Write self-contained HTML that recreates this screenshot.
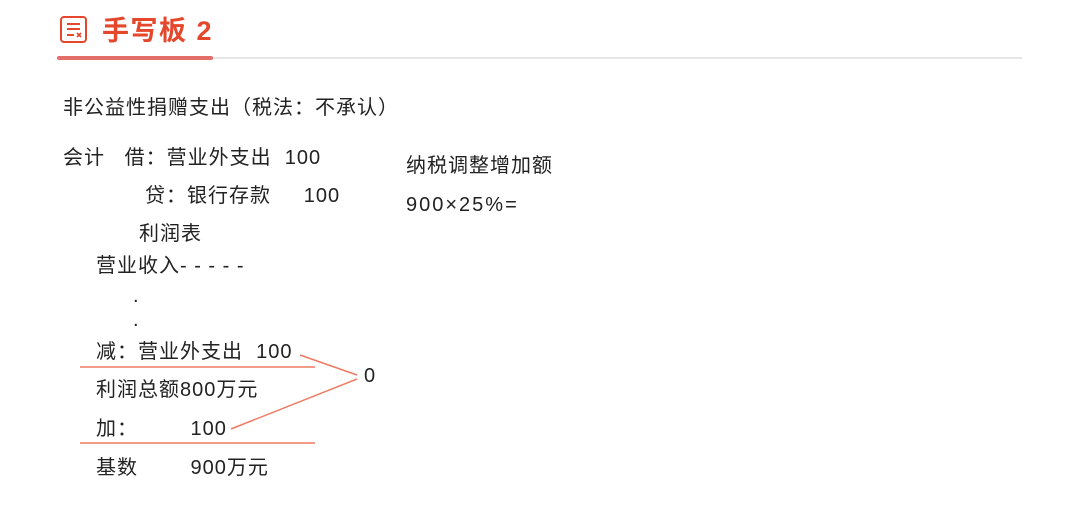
<!DOCTYPE html>
<html><head><meta charset="utf-8"><style>
body{margin:0;width:1087px;height:510px;background:#fff;position:relative;overflow:hidden;font-family:"Liberation Sans","Noto Sans CJK SC",sans-serif;color:#222}
.t{position:absolute;font-size:20px;line-height:24px;white-space:pre;letter-spacing:1px}
</style></head><body>
<svg style="position:absolute;left:59px;top:15px" width="30" height="30" viewBox="0 0 30 30" fill="none" stroke="#e4472c" stroke-width="2">
<rect x="2" y="2" width="25" height="25" rx="3"/>
<line x1="8" y1="9" x2="21" y2="9"/><line x1="8" y1="14" x2="21" y2="14"/><line x1="8" y1="20" x2="15" y2="20"/>
<path d="M18 18l4 4M22 18l-4 4" stroke-width="1.6"/>
</svg>
<div class="t" style="left:102px;top:14px;font-size:27px;line-height:34px;color:#e4472c;letter-spacing:1.5px;font-weight:bold">手写板 2</div>
<div style="position:absolute;left:57px;top:57px;width:965px;height:2px;background:#e6e6e6"></div>
<div style="position:absolute;left:57px;top:56px;width:156px;height:4px;background:#e36f6a;border-radius:2px"></div>

<div class="t" style="left:63px;top:96px;letter-spacing:1px">非公益性捐赠支出（税法：不承认）</div>
<div class="t" style="left:63px;top:146px">会计   借：营业外支出  100</div>
<div class="t" style="left:145px;top:184px">贷：银行存款     100</div>
<div class="t" style="left:139px;top:222px">利润表</div>
<div class="t" style="left:96px;top:254px">营业收入- - - - -</div>
<div class="t" style="left:133px;top:284px">.</div>
<div class="t" style="left:133px;top:308px">.</div>
<div class="t" style="left:96px;top:340px">减：营业外支出  100</div>
<div class="t" style="left:96px;top:378px">利润总额800万元</div>
<div class="t" style="left:96px;top:417px">加：        100</div>
<div class="t" style="left:96px;top:456px">基数        900万元</div>
<div class="t" style="left:364px;top:364px">0</div>
<div class="t" style="left:406px;top:154px">纳税调整增加额</div>
<div class="t" style="left:406px;top:193px;letter-spacing:2px">900×25%=</div>
<svg style="position:absolute;left:0;top:0" width="1087" height="510">
<g stroke="#ef7a62" stroke-width="1.5">
<line x1="80" y1="367" x2="315" y2="367"/>
<line x1="80" y1="443" x2="315" y2="443"/>
<line x1="300" y1="355" x2="357" y2="375"/>
<line x1="357" y1="379" x2="231" y2="429"/>
</g></svg>
</body></html>
